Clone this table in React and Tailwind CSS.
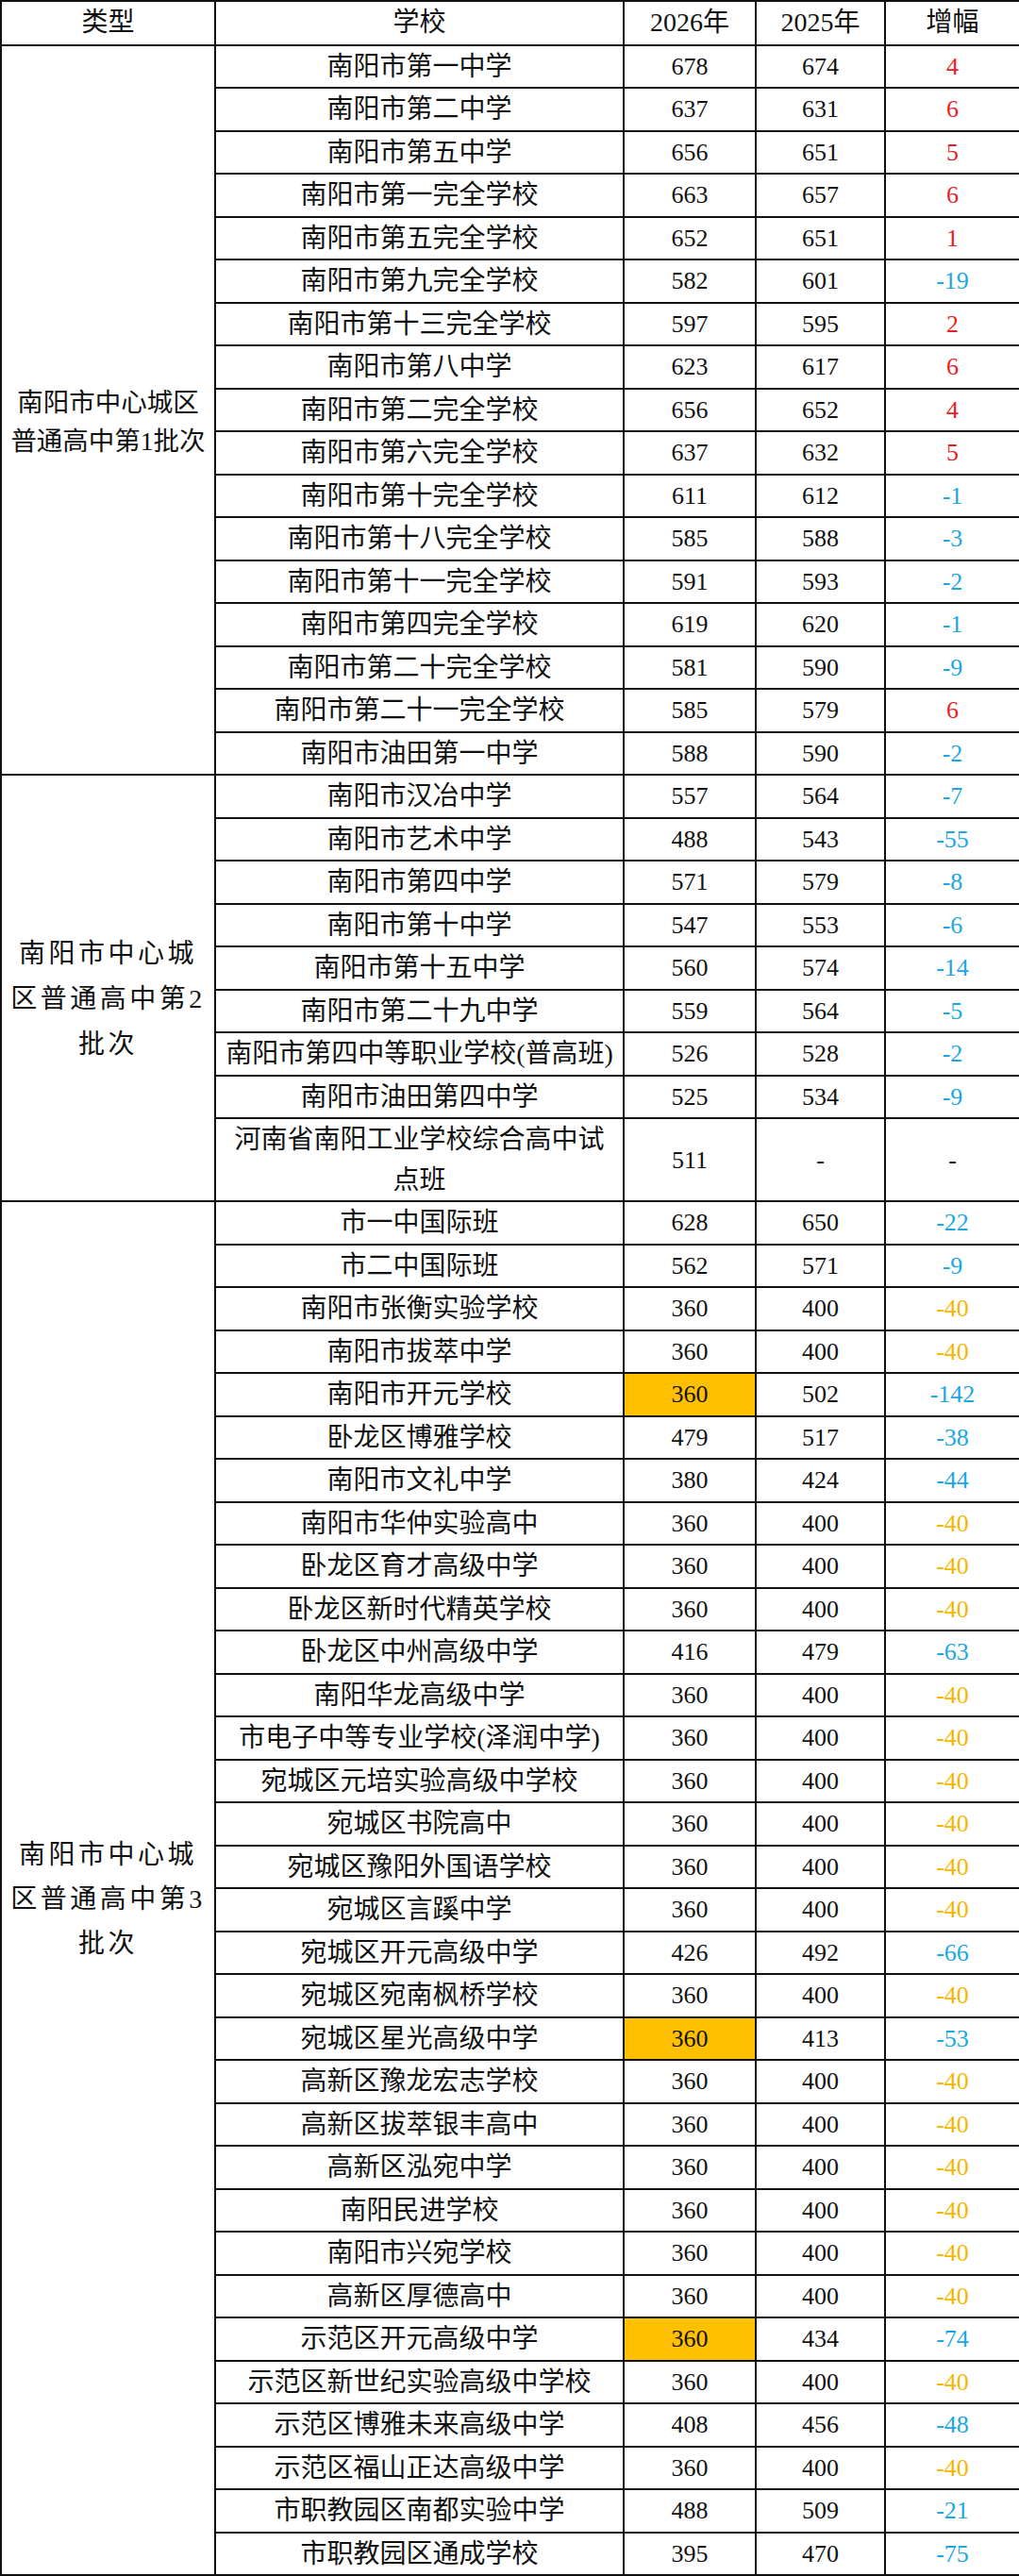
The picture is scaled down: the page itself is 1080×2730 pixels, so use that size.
import React from 'react';

const groups = [
  {
    label: ['南阳市中心城区', '普通高中第1批次'],
    span: 'row-span-17',
    labelClass: 'text-[27.5px] leading-[41px] pt-[26px]',
    rows: [
      ['南阳市第一中学', 678, 674, 4],
      ['南阳市第二中学', 637, 631, 6],
      ['南阳市第五中学', 656, 651, 5],
      ['南阳市第一完全学校', 663, 657, 6],
      ['南阳市第五完全学校', 652, 651, 1],
      ['南阳市第九完全学校', 582, 601, -19],
      ['南阳市第十三完全学校', 597, 595, 2],
      ['南阳市第八中学', 623, 617, 6],
      ['南阳市第二完全学校', 656, 652, 4],
      ['南阳市第六完全学校', 637, 632, 5],
      ['南阳市第十完全学校', 611, 612, -1],
      ['南阳市第十八完全学校', 585, 588, -3],
      ['南阳市第十一完全学校', 591, 593, -2],
      ['南阳市第四完全学校', 619, 620, -1],
      ['南阳市第二十完全学校', 581, 590, -9],
      ['南阳市第二十一完全学校', 585, 579, 6],
      ['南阳市油田第一中学', 588, 590, -2],
    ],
  },
  {
    label: ['南阳市中心城', '区普通高中第2', '批次'],
    span: 'row-span-9',
    labelClass: 'text-[28px] tracking-[3.5px] leading-[48px] pt-[24px]',
    rows: [
      ['南阳市汉冶中学', 557, 564, -7],
      ['南阳市艺术中学', 488, 543, -55],
      ['南阳市第四中学', 571, 579, -8],
      ['南阳市第十中学', 547, 553, -6],
      ['南阳市第十五中学', 560, 574, -14],
      ['南阳市第二十九中学', 559, 564, -5],
      ['南阳市第四中等职业学校(普高班)', 526, 528, -2],
      ['南阳市油田第四中学', 525, 534, -9],
      ['河南省南阳工业学校综合高中试点班', 511, '-', '-'],
    ],
  },
  {
    label: ['南阳市中心城', '区普通高中第3', '批次'],
    span: 'row-span-32',
    labelClass: 'text-[28px] tracking-[3.5px] leading-[47px] pt-[22px]',
    rows: [
      ['市一中国际班', 628, 650, -22],
      ['市二中国际班', 562, 571, -9],
      ['南阳市张衡实验学校', 360, 400, -40],
      ['南阳市拔萃中学', 360, 400, -40],
      ['南阳市开元学校', 360, 502, -142, true],
      ['卧龙区博雅学校', 479, 517, -38],
      ['南阳市文礼中学', 380, 424, -44],
      ['南阳市华仲实验高中', 360, 400, -40],
      ['卧龙区育才高级中学', 360, 400, -40],
      ['卧龙区新时代精英学校', 360, 400, -40],
      ['卧龙区中州高级中学', 416, 479, -63],
      ['南阳华龙高级中学', 360, 400, -40],
      ['市电子中等专业学校(泽润中学)', 360, 400, -40],
      ['宛城区元培实验高级中学校', 360, 400, -40],
      ['宛城区书院高中', 360, 400, -40],
      ['宛城区豫阳外国语学校', 360, 400, -40],
      ['宛城区言蹊中学', 360, 400, -40],
      ['宛城区开元高级中学', 426, 492, -66],
      ['宛城区宛南枫桥学校', 360, 400, -40],
      ['宛城区星光高级中学', 360, 413, -53, true],
      ['高新区豫龙宏志学校', 360, 400, -40],
      ['高新区拔萃银丰高中', 360, 400, -40],
      ['高新区泓宛中学', 360, 400, -40],
      ['南阳民进学校', 360, 400, -40],
      ['南阳市兴宛学校', 360, 400, -40],
      ['高新区厚德高中', 360, 400, -40],
      ['示范区开元高级中学', 360, 434, -74, true],
      ['示范区新世纪实验高级中学校', 360, 400, -40],
      ['示范区博雅未来高级中学', 408, 456, -48],
      ['示范区福山正达高级中学', 360, 400, -40],
      ['市职教园区南都实验中学', 488, 509, -21],
      ['市职教园区通成学校', 395, 470, -75],
    ],
  },
];

const cell = 'flex items-center justify-center text-center border-r-2 border-b-2 border-[#111]';

function deltaColor(d) {
  if (d === '-') return 'text-[#111]';
  if (d > 0) return 'text-[#ec1c24]';
  if (d === -40) return 'text-[#f7b500]';
  return 'text-[#1ba7e1]';
}

export default function App() {
  return (
    <div className="w-[1080px] bg-white font-['Liberation_Serif','Noto_Sans_CJK_SC',serif] text-[#111]">
      <div className="grid grid-cols-[227px_433px_140px_137px_143px] grid-rows-[46.5px_repeat(25,45.5px)_88px_repeat(32,45.5px)] border-t-2 border-l-2 border-[#111]">
        {/* header */}
        <div className={`${cell} text-[28px]`}>类型</div>
        <div className={`${cell} text-[28px]`}>学校</div>
        <div className={`${cell} text-[28px]`}>2026年</div>
        <div className={`${cell} text-[28px]`}>2025年</div>
        <div className={`${cell} text-[28px]`}>增幅</div>

        {groups.map((g) => (
          <React.Fragment key={g.label.join('')}>
            <div className={`${cell} ${g.span} flex-col ${g.labelClass}`}>
              {g.label.map((line) => (
                <span key={line}>{line}</span>
              ))}
            </div>
            {g.rows.map(([name, y26, y25, d, hl]) => (
              <React.Fragment key={name}>
                <div className={`${cell} px-[10px] text-[28px] leading-[43px]`}>{name}</div>
                <div className={`${cell} text-[26px] ${hl ? 'bg-[#ffc000]' : ''}`}>{y26}</div>
                <div className={`${cell} text-[26px]`}>{y25}</div>
                <div className={`${cell} text-[26px] ${deltaColor(d)}`}>{d}</div>
              </React.Fragment>
            ))}
          </React.Fragment>
        ))}
      </div>
    </div>
  );
}
